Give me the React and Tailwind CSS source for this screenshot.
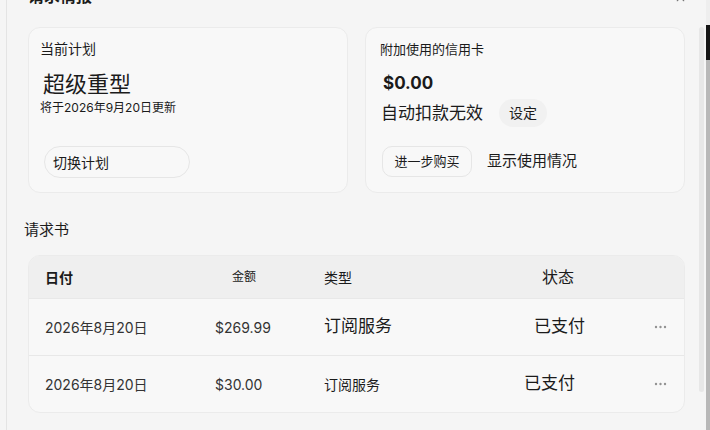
import React from "react";
import { X } from "lucide-react";

const FONT = { fontFamily: '"Inter", "Noto Sans CJK SC", sans-serif' };

const Dots = () => (
  <svg width="13" height="4" viewBox="0 0 13 4" className="text-[#929292]">
    <circle cx="2" cy="2" r="1.2" fill="currentColor" />
    <circle cx="6.5" cy="2" r="1.2" fill="currentColor" />
    <circle cx="11" cy="2" r="1.2" fill="currentColor" />
  </svg>
);

const invoices = [
  { date: "2026年8月20日", amount: "$269.99", type: "订阅服务", typeSize: "text-[17px]", status: "已支付", statusPad: "pl-[10px]" },
  { date: "2026年8月20日", amount: "$30.00", type: "订阅服务", typeSize: "text-[14px]", status: "已支付", statusPad: "pl-0" },
];

export default function App() {
  return (
    <div
      className="w-[710px] h-[430px] overflow-hidden bg-[#f5f5f5] text-[#1b1b1b] flex"
      style={FONT}
    >
      <div className="w-[6px] shrink-0" />

      {/* dialog panel */}
      <div className="flex-1 border-l border-[#e4e4e4] pl-[21px] pr-[13px]">
        <div className="flex items-center justify-between h-5 -mt-[14px]">
          <span className="text-base font-semibold leading-5">请求情报</span>
          <X size={13} className="text-[#777] mr-[-2px] mt-[2px]" />
        </div>

        <div className="grid grid-cols-[320px_320px] gap-[17px] mt-[21px]">
          {/* current plan */}
          <div className="h-[166px] rounded-xl border border-[#ebebeb] bg-[#f8f8f8] pl-[11px] pt-[11px]">
            <div className="text-[14px] leading-5">当前计划</div>
            <div className="text-[22px] leading-7 ml-[3px] mt-[11px]">超级重型</div>
            <div className="text-[12px] leading-4 mt-[2px]">将于2026年9月20日更新</div>
            <button className="mt-[30px] ml-[4px] w-[146px] h-[32px] rounded-full border border-[#e6e6e6] bg-[#f8f8f8] text-left pl-[8px] text-[14px]">
              切换计划
            </button>
          </div>

          {/* credit card */}
          <div className="h-[166px] rounded-xl border border-[#ebebeb] bg-[#f8f8f8] pl-[14px] pt-[11px]">
            <div className="text-[13px] leading-5">附加使用的信用卡</div>
            <div className="text-[17px] leading-6 font-bold ml-[3px] mt-[12px]">$0.00</div>
            <div className="flex items-center mt-[4px] ml-[1px]">
              <span className="text-[17px] leading-6">自动扣款无效</span>
              <span className="ml-[16px] h-[28px] px-[10px] rounded-full bg-[#f1f1f1] text-[14px] leading-[28px]">设定</span>
            </div>
            <div className="flex items-center mt-[19px] ml-[2px]">
              <button className="w-[90px] h-[31px] rounded-[10px] border border-[#e6e6e6] bg-[#f8f8f8] text-[13px]">
                进一步购买
              </button>
              <span className="ml-[15px] text-[15px]">显示使用情况</span>
            </div>
          </div>
        </div>

        <div className="text-[15px] leading-5 -ml-[4px] mt-[27px]">请求书</div>

        {/* invoices table */}
        <div className="mt-[15px] w-[657px] rounded-xl border border-[#ebebeb] bg-[#f8f8f8] overflow-hidden">
          <div className="grid grid-cols-[186px_109px_200px_113px_1fr] items-center h-[42px] bg-[#efefef]">
            <span className="pl-[16px] text-[14px] font-bold">日付</span>
            <span className="pl-[17px] text-[12px]">金额</span>
            <span className="text-[14px]">类型</span>
            <span className="pl-[18px] text-[16px]">状态</span>
            <span />
          </div>
          {invoices.map((row, i) => (
            <div
              key={i}
              className="grid grid-cols-[186px_109px_200px_113px_1fr] items-center h-[57px] border-t border-[#e8e8e8]"
            >
              <span className="pl-[16px] text-[14px] text-[#333]">{row.date}</span>
              <span className="text-[14px] text-[#333]">{row.amount}</span>
              <span className={row.typeSize}>{row.type}</span>
              <span className={`${row.statusPad} text-[17px]`}>{row.status}</span>
              <span className="pl-[17px] flex">
                <Dots />
              </span>
            </div>
          ))}
        </div>
      </div>

      {/* scrollbar */}
      <div className="w-[13px] shrink-0 flex">
        <div className="ml-[1px] mt-[27px] w-[5px] h-[365px] rounded-full bg-[#e7e7e7]" />
        <div className="ml-[2px] w-[5px] flex flex-col">
          <div className="h-[25px] bg-[#eeeeee]" />
          <div className="h-[35px] bg-[#151515]" />
          <div className="flex-1 bg-[#b8b8b8]" />
        </div>
      </div>
    </div>
  );
}
